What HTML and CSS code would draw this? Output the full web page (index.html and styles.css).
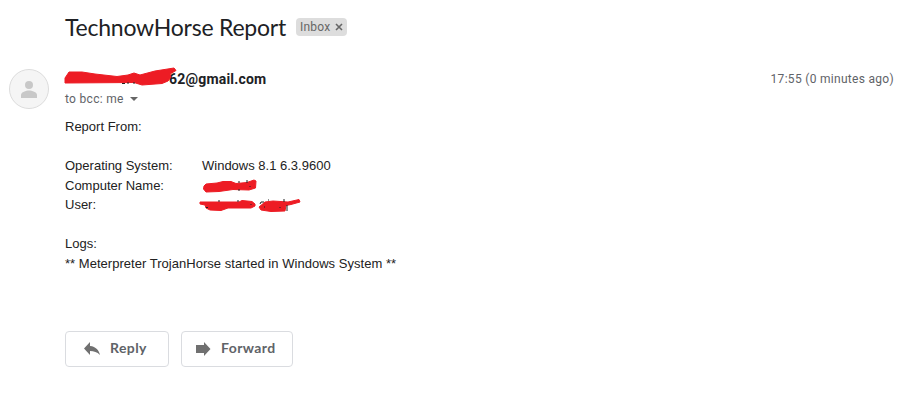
FILE: index.html
```html
<!DOCTYPE html>
<html lang="en">
<head>
<meta charset="utf-8">
<title>TechnowHorse Report</title>
<link rel="stylesheet" href="styles.css">
</head>
<body>
<header class="subject">
  <h1>TechnowHorse Report</h1>
  <span class="label">Inbox <svg width="8" height="8" viewBox="0 0 8 8"><path d="M1 1l6 6M7 1L1 7"/></svg></span>
</header>
<main class="message">
  <svg class="avatar" width="40" height="40" viewBox="0 0 40 40">
    <circle cx="20" cy="20" r="19.5" fill="#f5f5f5" stroke="#dcdcdc"/>
    <circle cx="20" cy="16" r="4" fill="#c8c8c8"/>
    <path d="M12 29v-3c0-3 5-4.500 8-4.500s8 1.500 8 4.500v3z" fill="#c8c8c8"/>
  </svg>
  <div class="content">
    <div class="meta">
      <span class="sender">
        <b>62@gmail.com</b>
        <svg class="mark" width="112" height="20" viewBox="0 0 112 20">
          <path d="M0 16L0 11 4 5 17 5 30 7 52 9.500 63 8 69 6 75 8 90 4 109 1 111 3.500 105 7 106 10 103 14 97 16.500 77 18 69 15.500z"/>
          <path class="ink" d="M57 16.500h3M63 15v2M69 15v2"/>
        </svg>
      </span>
      <time>17:55 (0 minutes ago)</time>
    </div>
    <div class="recipient">to bcc: me <i></i></div>
    <div class="body">
      <p>Report From:</p>
      <dl>
        <dt>Operating System:</dt><dd>Windows 8.1 6.3.9600</dd>
        <dt>Computer Name:</dt><dd>
          <svg class="mark" width="56" height="20" viewBox="0 0 56 20">
            <path d="M4 10L6 8 17 7 23 5.500 31 5.500 36 7.500 47 6.500 54 4 56 5 55.500 12 49 14 33 13.500 19 15.500 6 16 3.500 13z"/>
            <path class="ink" d="M50 10v1M39 7V5M47 7V4M38 14h2"/>
          </svg></dd>
        <dt>User:</dt><dd>
          <svg class="mark" width="104" height="20" viewBox="0 0 104 20">
            <path d="M0 9L0 7 39 7 42 5.500 52 6.500 55 9 55 11 51 13 28 13 21 15.500 10 15 6 13 5 10z"/>
            <path d="M59 12L65 7 73 6 88 7 99 4.500 100 7 91 9.500 86 10.500 85 16 71 16.500 61 15z"/>
            <path class="ink" d="M6 12.500h2M51 9v1M60 9l1-2h3M68 5h1M80 12v1M87 10v6M84 7V4M19 7V5M38 7V5M64 12h1"/>
          </svg></dd>
      </dl>
      <p>Logs:<br><span class="log">** Meterpreter TrojanHorse started in Windows System **</span></p>
    </div>
    <div class="actions">
      <button class="reply"><svg width="16" height="14" viewBox="0 0 16 14"><path d="M6 0v4c6 .5 9 4.500 10 9-3-3-6-4-10-4v4L0 6.500z"/></svg><span>Reply</span></button>
      <button class="forward"><svg width="15" height="14" viewBox="0 0 15 14"><path d="M0 3h8V0l6.500 7L8 14v-3H0z"/></svg><span>Forward</span></button>
    </div>
  </div>
</main>
</body>
</html>
```
FILE: styles.css
```css
* { box-sizing: border-box; }
body { margin: 0; background: #fff; color: #222; font-family: Roboto, sans-serif; }
svg { display: block; flex: none; }
.subject { display: flex; align-items: center; height: 54px; padding-left: 65px; gap: 10px; }
h1 { margin: 0; width: 221px; font: 400 23px/28px Lato, sans-serif; letter-spacing: -.22px; color: #202124; white-space: nowrap; }
.label { display: flex; align-items: center; gap: 5px; width: 51px; height: 18px; padding-left: 4px; border-radius: 4px; background: #ddd; color: #666; font-size: 12px; letter-spacing: .2px; }
.label svg { fill: none; stroke: #666; stroke-width: 1.6; }
.message { display: grid; grid-template-columns: 56px 1fr; padding: 15px 9px 0; }
.content { min-width: 0; }
.meta { display: flex; justify-content: space-between; height: 20px; line-height: 20px; }
.sender { display: flex; position: relative; padding-left: 104px; color: #202124; }
.sender b { font-weight: 700; font-size: 14px; letter-spacing: .2px; }
.sender .mark { position: absolute; left: 0; top: -2px; }
time { font-size: 12px; letter-spacing: .3px; color: #5f6368; }
.recipient { display: flex; align-items: center; gap: 6px; height: 20px; font-size: 12px; letter-spacing: .3px; color: #5f6368; }
.recipient i { border: 4px solid transparent; border-top-color: #666; border-bottom: 0; }
.body { padding-top: 8px; font: 13px/19.500px "Liberation Sans", sans-serif; }
.body p { margin: 0; }
.log { letter-spacing: .03px; }
dl { display: grid; grid-template-columns: 137px 1fr; grid-auto-rows: 19.500px; margin: 19.500px 0; }
dd { margin: 0; }
.mark { fill: #ed1c24; overflow: visible; }
.mark path { stroke: #ed1c24; stroke-width: 1; stroke-linejoin: round; }
.mark .ink { fill: none; stroke: #222; }
dd .mark { margin-left: -2px; }
.actions { display: flex; gap: 12px; margin-top: 58px; }
button { display: flex; align-items: center; height: 36px; padding: 0; border: 1px solid #dadce0; border-radius: 4px; background: #fff; color: #5f6368; font: 700 14px Lato, sans-serif; letter-spacing: .4px; }
button svg { fill: #707070; }
button span { padding-bottom: 3px; }
.reply { width: 104px; padding-left: 18px; gap: 10px; }
.forward { width: 112px; padding-left: 14px; gap: 10px; }
```
